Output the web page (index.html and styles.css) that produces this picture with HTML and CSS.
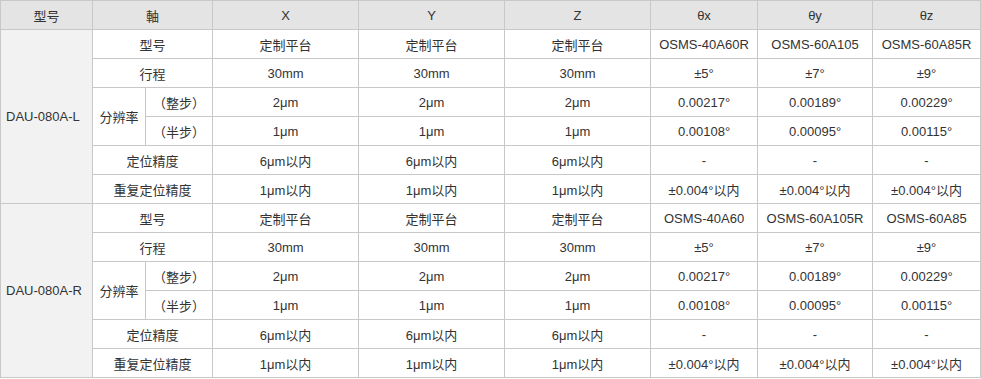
FILE: index.html
```html
<!DOCTYPE html>
<html lang="zh">

<head>
    <meta charset="UTF-8">
    <title>规格表</title>
    <link rel="stylesheet" href="styles.css">
</head>

<body>

    <table class="spec">
        <colgroup>
            <col class="c-model">
            <col class="c-label">
            <col class="c-sub">
            <col class="c-axis">
            <col class="c-axis">
            <col class="c-axis">
            <col class="c-tx">
            <col class="c-ty">
            <col class="c-tz">
        </colgroup>
        <thead>
            <tr>
                <th>型号</th>
                <th colspan="2">軸</th>
                <th>X</th>
                <th>Y</th>
                <th>Z</th>
                <th>θx</th>
                <th>θy</th>
                <th>θz</th>
            </tr>
        </thead>
        <tbody>
            <tr>
                <td rowspan="6" class="model">DAU-080A-L</td>
                <td colspan="2">型号</td>
                <td>定制平台</td>
                <td>定制平台</td>
                <td>定制平台</td>
                <td>OSMS-40A60R</td>
                <td>OSMS-60A105</td>
                <td>OSMS-60A85R</td>
            </tr>
            <tr>
                <td colspan="2">行程</td>
                <td>30mm</td>
                <td>30mm</td>
                <td>30mm</td>
                <td>±5°</td>
                <td>±7°</td>
                <td>±9°</td>
            </tr>
            <tr>
                <td rowspan="2">分辨率</td>
                <td>（整步）</td>
                <td>2μm</td>
                <td>2μm</td>
                <td>2μm</td>
                <td>0.00217°</td>
                <td>0.00189°</td>
                <td>0.00229°</td>
            </tr>
            <tr>
                <td>（半步）</td>
                <td>1μm</td>
                <td>1μm</td>
                <td>1μm</td>
                <td>0.00108°</td>
                <td>0.00095°</td>
                <td>0.00115°</td>
            </tr>
            <tr>
                <td colspan="2">定位精度</td>
                <td>6μm以内</td>
                <td>6μm以内</td>
                <td>6μm以内</td>
                <td>-</td>
                <td>-</td>
                <td>-</td>
            </tr>
            <tr>
                <td colspan="2">重复定位精度</td>
                <td>1μm以内</td>
                <td>1μm以内</td>
                <td>1μm以内</td>
                <td>±0.004°以内</td>
                <td>±0.004°以内</td>
                <td>±0.004°以内</td>
            </tr>
            <tr>
                <td rowspan="6" class="model">DAU-080A-R</td>
                <td colspan="2">型号</td>
                <td>定制平台</td>
                <td>定制平台</td>
                <td>定制平台</td>
                <td>OSMS-40A60</td>
                <td>OSMS-60A105R</td>
                <td>OSMS-60A85</td>
            </tr>
            <tr>
                <td colspan="2">行程</td>
                <td>30mm</td>
                <td>30mm</td>
                <td>30mm</td>
                <td>±5°</td>
                <td>±7°</td>
                <td>±9°</td>
            </tr>
            <tr>
                <td rowspan="2">分辨率</td>
                <td>（整步）</td>
                <td>2μm</td>
                <td>2μm</td>
                <td>2μm</td>
                <td>0.00217°</td>
                <td>0.00189°</td>
                <td>0.00229°</td>
            </tr>
            <tr>
                <td>（半步）</td>
                <td>1μm</td>
                <td>1μm</td>
                <td>1μm</td>
                <td>0.00108°</td>
                <td>0.00095°</td>
                <td>0.00115°</td>
            </tr>
            <tr>
                <td colspan="2">定位精度</td>
                <td>6μm以内</td>
                <td>6μm以内</td>
                <td>6μm以内</td>
                <td>-</td>
                <td>-</td>
                <td>-</td>
            </tr>
            <tr>
                <td colspan="2">重复定位精度</td>
                <td>1μm以内</td>
                <td>1μm以内</td>
                <td>1μm以内</td>
                <td>±0.004°以内</td>
                <td>±0.004°以内</td>
                <td>±0.004°以内</td>
            </tr>
        </tbody>
    </table>

</body>

</html>
```

FILE: styles.css
```css
body {
    font-family: "Liberation Sans", Arial, "Noto Sans CJK SC", sans-serif;
    font-size: 13px;
    color: #333;
    margin: 0;
    padding: 0;
    background: #fff;
}

.spec {
    border-collapse: collapse;
    table-layout: fixed;
    width: 980px;
}

.spec th,
.spec td {
    border: 1px solid #c8c8c8;
    height: 28px;
    padding: 0;
    text-align: center;
    vertical-align: middle;
    font-weight: normal;
    white-space: nowrap;
}

.spec th {
    background-color: #e4e4e4;
}

.spec td.model {
    background-color: #f2f2f2;
    text-align: left;
    padding-left: 5px;
}

.c-model { width: 92px; }
.c-label { width: 53px; }
.c-sub { width: 67px; }
.c-axis { width: 146px; }
.c-tx { width: 107px; }
.c-ty { width: 115px; }
.c-tz { width: 108px; }
```
